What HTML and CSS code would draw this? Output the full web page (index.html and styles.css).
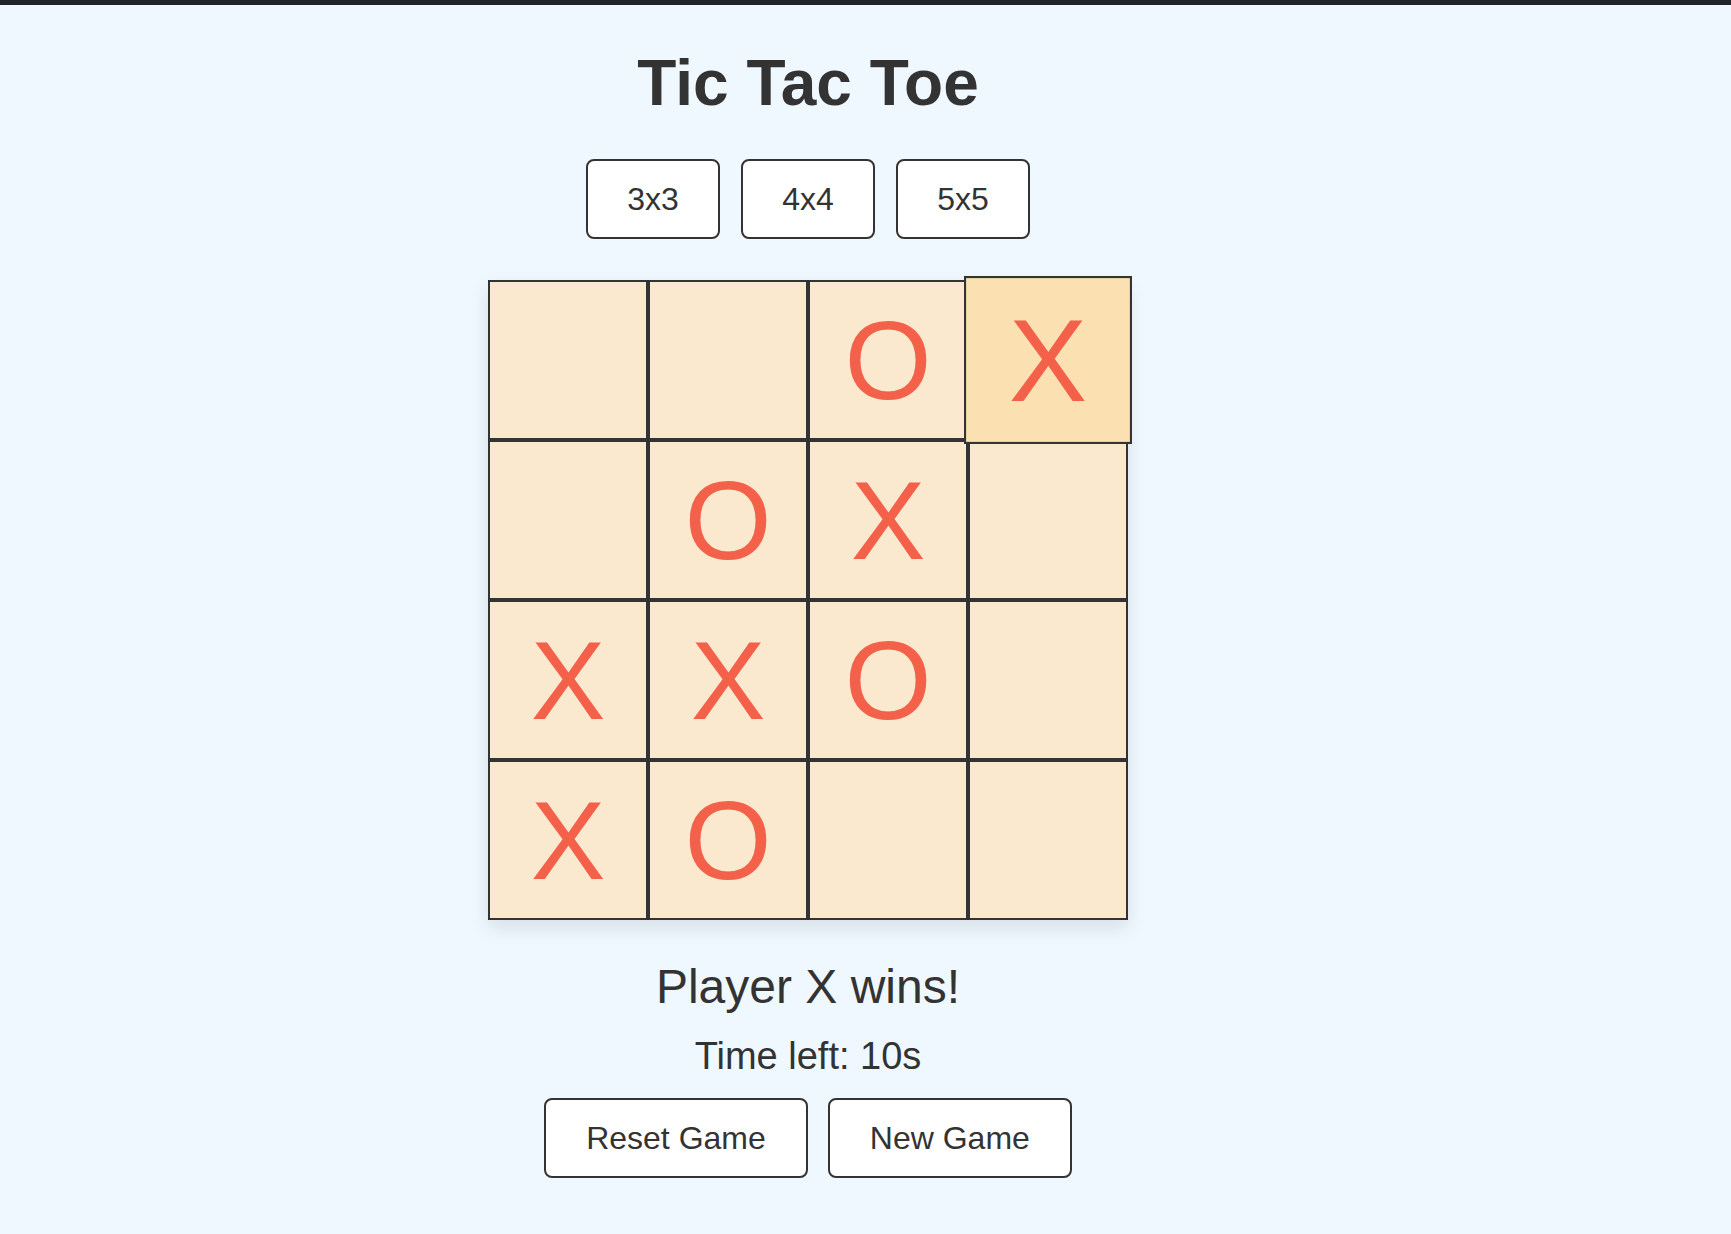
FILE: index.html
```html
<!DOCTYPE html>
<html lang="en">
<head>
<meta charset="utf-8">
<title>Tic Tac Toe</title>
<link rel="stylesheet" href="styles.css">
</head>
<body>
<div class="topbar"></div>
<main class="app">
  <h1 class="title">Tic Tac Toe</h1>
  <div class="sizes">
    <button class="btn size-btn">3x3</button>
    <button class="btn size-btn">4x4</button>
    <button class="btn size-btn">5x5</button>
  </div>
  <div class="board">
    <div class="cell"></div>
    <div class="cell"></div>
    <div class="cell">O</div>
    <div class="cell cell-hover">X</div>
    <div class="cell"></div>
    <div class="cell">O</div>
    <div class="cell">X</div>
    <div class="cell"></div>
    <div class="cell">X</div>
    <div class="cell">X</div>
    <div class="cell">O</div>
    <div class="cell"></div>
    <div class="cell">X</div>
    <div class="cell">O</div>
    <div class="cell"></div>
    <div class="cell"></div>
  </div>
  <section class="footer">
    <div class="status">Player X wins!</div>
    <div class="timer">Time left: 10s</div>
    <div class="actions">
      <button class="btn action-btn">Reset Game</button>
      <button class="btn action-btn">New Game</button>
    </div>
  </section>
</main>
</body>
</html>
```

FILE: styles.css
```css
html, body {
  margin: 0;
  padding: 0;
}

body {
  background: #f0f8ff;
  color: #333;
  font-family: "Liberation Sans", Arial, sans-serif;
  min-height: 1234px;
}

.topbar {
  height: 5px;
  background: #212529;
}

.app {
  width: 1616px;
  display: flex;
  flex-direction: column;
  align-items: center;
  padding-top: 42px;
}

.title {
  margin: 0;
  font-size: 64px;
  line-height: 72px;
  font-weight: bold;
  color: #333;
}

.sizes {
  display: flex;
  gap: 21px;
  margin-top: 40px;
}

.btn {
  box-sizing: border-box;
  height: 80px;
  padding: 0 40px;
  background: #fff;
  color: #333;
  border: 2px solid #333;
  border-radius: 8px;
  font-family: "Liberation Sans", Arial, sans-serif;
  font-size: 32px;
  line-height: 1;
  display: flex;
  align-items: center;
  justify-content: center;
  cursor: pointer;
}

.size-btn {
  width: 134px;
  padding: 0;
}

.board {
  margin-top: 41px;
  display: grid;
  grid-template-columns: repeat(4, 160px);
  grid-template-rows: repeat(4, 160px);
  box-shadow: 0 8px 18px rgba(0, 0, 0, 0.1);
}

.cell {
  box-sizing: border-box;
  border: 2px solid #333;
  background: #fbe9cf;
  color: #f4614a;
  font-size: 112px;
  display: flex;
  align-items: center;
  justify-content: center;
}

.cell-hover {
  background: #fbe0b1;
  transform: scale(1.05);
  position: relative;
  z-index: 1;
}

.footer {
  display: flex;
  flex-direction: column;
  align-items: center;
  margin-top: 39px;
}

.status {
  font-size: 48px;
  line-height: 56px;
}

.timer {
  margin-top: 19px;
  font-size: 38px;
  line-height: 44px;
}

.actions {
  display: flex;
  gap: 20px;
  margin-top: 20px;
}
```
